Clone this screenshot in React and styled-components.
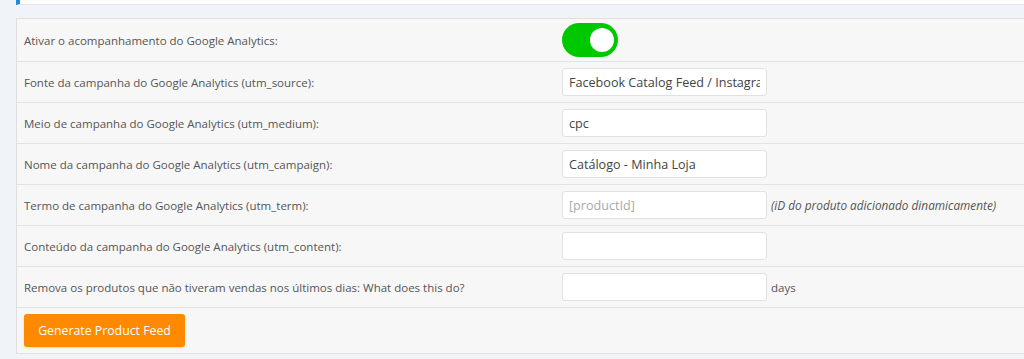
import styled, { createGlobalStyle } from "styled-components";

const GlobalStyle = createGlobalStyle`
  html, body {
    margin: 0;
    padding: 0;
    background: #f0f3f7;
    font-family: "Open Sans", "Liberation Sans", sans-serif;
  }
`;

const Page = styled.div`
  padding-left: 16px;
  height: 359px;
  overflow: hidden;
`;

const TopBar = styled.div`
  height: 4px;
  background: #fff;
  border-left: 4px solid #1f8ad8;
  border-bottom: 1px solid #e4e8ee;
  margin-bottom: 13px;
`;

const Table = styled.div`
  background: #f7f7f7;
  border: 1px solid #e0e0e0;
  border-right: none;
`;

const Row = styled.div`
  display: grid;
  grid-template-columns: 538px 1fr;
  align-items: center;
  height: ${(p) => p.h || 40}px;
  padding: 0 7px;
  border-bottom: ${(p) => (p.last ? "none" : "1px solid #e3e3e3")};
`;

const Label = styled.div`
  font-size: 11.5px;
  color: #555;
`;

const Field = styled.div`
  display: flex;
  align-items: center;
  gap: 4px;
`;

const Input = styled.input`
  box-sizing: border-box;
  width: 205px;
  height: 28px;
  padding: 0 6px;
  border: 1px solid #e1e1e1;
  border-radius: 3px;
  background: #fff;
  font-family: inherit;
  font-size: 12.6px;
  color: #444;
  outline: none;
  &::placeholder {
    color: #a7aaad;
  }
`;

const Hint = styled.span`
  font-size: ${(p) => (p.italic ? "11.8px" : "11.5px")};
  color: #555;
  font-style: ${(p) => (p.italic ? "italic" : "normal")};
`;

const Toggle = styled.div`
  width: 56px;
  height: 34px;
  border-radius: 17px;
  background: #00c800;
  display: flex;
  align-items: center;
  justify-content: flex-end;
  padding: 0 4px;
  box-sizing: border-box;
`;

const Knob = styled.div`
  width: 24px;
  height: 24px;
  border-radius: 50%;
  background: #fff;
`;

const Button = styled.button`
  width: 161px;
  height: 33px;
  background: #ff8a00;
  color: #fff;
  border: none;
  border-radius: 3px;
  box-shadow: 0 1px 2px rgba(0, 0, 0, 0.12);
  font-family: inherit;
  font-size: 12.3px;
  cursor: pointer;
`;

const rows = [
  { label: "Fonte da campanha do Google Analytics (utm_source):", value: "Facebook Catalog Feed / Instagram" },
  { label: "Meio de campanha do Google Analytics (utm_medium):", value: "cpc" },
  { label: "Nome da campanha do Google Analytics (utm_campaign):", value: "Catálogo - Minha Loja" },
  { label: "Termo de campanha do Google Analytics (utm_term):", placeholder: "[productId]", hint: "(iD do produto adicionado dinamicamente)", italic: true },
  { label: "Conteúdo da campanha do Google Analytics (utm_content):" },
  { label: "Remova os produtos que não tiveram vendas nos últimos dias: What does this do?", hint: "days" },
];

export default function App() {
  return (
    <Page>
      <GlobalStyle />
      <TopBar />
      <Table>
        <Row h={42}>
          <Label>Ativar o acompanhamento do Google Analytics:</Label>
          <Field>
            <Toggle>
              <Knob />
            </Toggle>
          </Field>
        </Row>
        {rows.map((r) => (
          <Row key={r.label}>
            <Label>{r.label}</Label>
            <Field>
              <Input defaultValue={r.value || ""} placeholder={r.placeholder} />
              {r.hint && <Hint italic={r.italic}>{r.hint}</Hint>}
            </Field>
          </Row>
        ))}
        <Row h={45} last>
          <div>
            <Button>Generate Product Feed</Button>
          </div>
        </Row>
      </Table>
    </Page>
  );
}
